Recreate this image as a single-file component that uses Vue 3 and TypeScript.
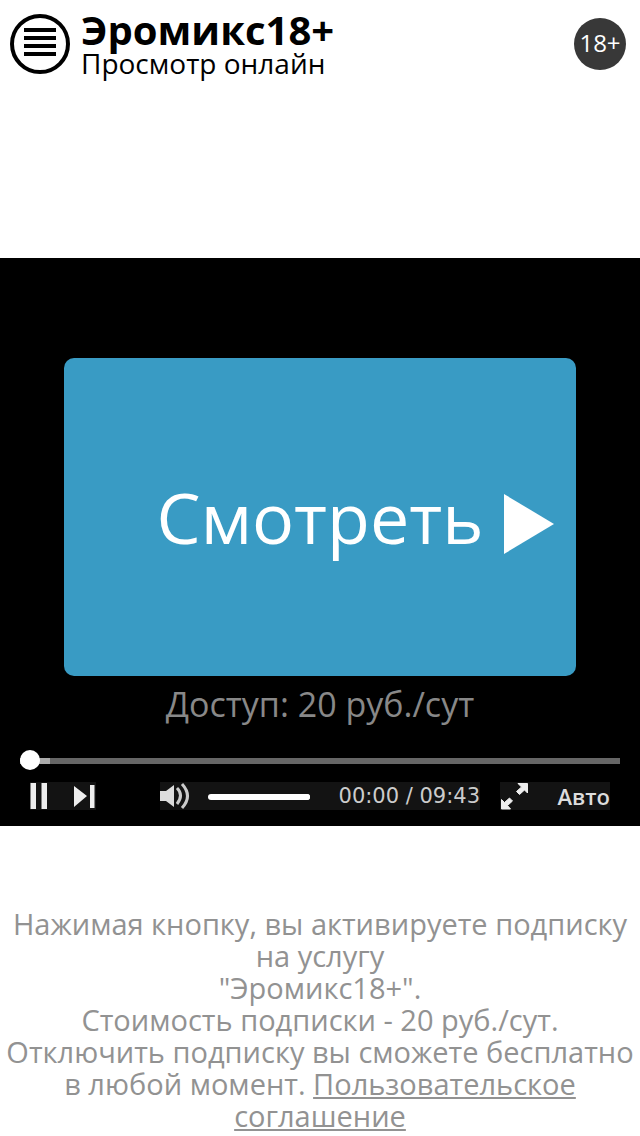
<script setup lang="ts">
import { ref } from 'vue'

const progress = ref(0)
const volume = ref(100)
</script>

<template>
  <div class="page">
    <header class="header">
      <button class="menu" type="button" aria-label="Меню">
        <svg viewBox="0 0 60 60" aria-hidden="true">
          <circle cx="30" cy="30" r="28" fill="none" stroke="#000" stroke-width="4" />
          <path d="M14 14h32v4H14zM14 22h32v4H14zM14 30h32v4H14zM14 38h32v4H14z" />
        </svg>
      </button>
      <div class="brand">
        <h1 class="title">Эромикс18+</h1>
        <p class="subtitle">Просмотр онлайн</p>
      </div>
      <span class="age">18+</span>
    </header>

    <main class="player">
      <button class="watch" type="button">
        <span class="watch-label">Смотреть</span>
        <svg class="watch-icon" viewBox="0 0 50 60" aria-hidden="true">
          <path d="M0 0L50 30L0 60z" fill="#fff" />
        </svg>
      </button>
      <p class="price">Доступ: 20 руб./сут</p>

      <input v-model="progress" class="seek" type="range" min="0" max="100" aria-label="Позиция" />

      <div class="controls">
        <div class="group">
          <button class="ctl pause" type="button" aria-label="Пауза">
            <svg viewBox="0 0 18 28" aria-hidden="true">
              <path d="M0.5 1h5.5v26H0.500zM11.500 1h5.500v26h-5.500z" fill="#eee" />
            </svg>
          </button>
          <button class="ctl next" type="button" aria-label="Следующее">
            <svg viewBox="0 0 24 28" aria-hidden="true">
              <path d="M2 4L15 14L2 25zM18 3h4.500v23h-4.500z" fill="#eee" />
            </svg>
          </button>
        </div>
        <div class="group sound">
          <button class="ctl mute" type="button" aria-label="Звук">
            <svg viewBox="0 0 30 28" aria-hidden="true">
              <path d="M0 9h6L14 3v22L6 19H0z" fill="#ddd" />
              <path d="M17 6q7 7 0 16M22 2q11 12 0 24" fill="none" stroke="#ccc" stroke-width="3" />
            </svg>
          </button>
          <input v-model="volume" class="volume" type="range" min="0" max="100" aria-label="Громкость" />
          <span class="time">00:00 / 09:43</span>
        </div>
        <div class="group view">
          <button class="ctl full" type="button" aria-label="Во весь экран">
            <svg viewBox="0 0 28 28" aria-hidden="true">
              <path
                d="M18 1.500h9.500V11l-3-3l-5 4.500l-3-3l5-4.500zM1.500 27v-9.500l3 3l5-4.500l3 3l-5 4.500l3 3.500z"
                fill="#eee"
                stroke="#eee"
                stroke-linejoin="round"
              />
            </svg>
          </button>
          <button class="ctl quality" type="button">Авто</button>
        </div>
      </div>
    </main>

    <footer class="terms">
      Нажимая кнопку, вы активируете подписку на&nbsp;услугу<br />
      "Эромикс18+".<br />
      Стоимость подписки - 20 руб./сут.<br />
      Отключить подписку вы сможете бесплатно в&nbsp;любой момент.
      <a href="#">Пользовательское соглашение</a>
    </footer>
  </div>
</template>

<style>
body {
  background: #fff;
}
</style>

<style scoped>
.page {
  font-family: "Open Sans", "Noto Sans", sans-serif;
  color: #000;
}
button {
  border: 0;
  padding: 0;
  margin: 0;
  background: none;
  color: inherit;
  font: inherit;
  cursor: pointer;
}
svg {
  display: block;
}
h1,
p {
  margin: 0;
}
.header {
  display: flex;
  align-items: flex-start;
  box-sizing: border-box;
  min-height: 258px;
  padding: 14px 14px 0 10px;
}
.menu,
.menu svg {
  width: 60px;
  height: 60px;
}
.brand {
  flex: 1;
  padding-left: 11px;
}
.title {
  font-size: 40px;
  line-height: 32px;
  font-weight: 700;
}
.subtitle {
  font-size: 28px;
  line-height: 34px;
}
.age {
  width: 52px;
  height: 52px;
  margin-top: 4px;
  border-radius: 50%;
  background: #383838;
  color: #fff;
  font-size: 24px;
  line-height: 50px;
  text-align: center;
}
.player {
  display: flex;
  flex-direction: column;
  align-items: center;
  padding: 100px 0 16px;
  background: #000;
}
.watch {
  display: grid;
  grid-template-columns: 1fr auto 1fr;
  grid-template-rows: 110px;
  align-items: center;
  width: 80%;
  padding: 111px 0 97px;
  border-radius: 10px;
  background: #399bc4;
  color: #fff;
}
.watch-label {
  grid-column: 2;
  align-self: start;
  font-size: 70px;
  line-height: 96px;
}
.watch-icon {
  width: 50px;
  height: 60px;
  margin-left: 21px;
}
.price {
  color: #888;
  font-size: 34px;
  line-height: 56px;
}
.seek {
  appearance: none;
  width: calc(100% - 40px);
  height: 20px;
  margin: 18px 0 12px;
  background: linear-gradient(90deg, #aaa 30px, #666 30px) 0 8px / 100% 6px no-repeat;
}
.seek::-webkit-slider-thumb {
  appearance: none;
  width: 20px;
  height: 20px;
  border-radius: 50%;
  background: #fff;
}
.controls {
  display: flex;
  box-sizing: border-box;
  width: 100%;
  padding: 0 30px;
}
.group {
  display: flex;
  align-items: center;
  height: 28px;
  background: #131313;
}
.sound {
  flex: 1;
  margin: 0 20px 0 64px;
}
.view {
  justify-content: space-between;
  width: 110px;
}
.ctl svg {
  height: 28px;
}
.pause svg {
  width: 18px;
}
.next {
  margin-left: 24px;
}
.next svg {
  width: 24px;
}
.mute svg {
  width: 30px;
}
.full svg {
  width: 28px;
}
.volume {
  appearance: none;
  width: 102px;
  height: 6px;
  margin: 2px 0 0 18px;
  border-radius: 3px;
  background: #fff;
}
.volume::-webkit-slider-thumb {
  appearance: none;
  width: 6px;
  height: 6px;
  border-radius: 50%;
  background: #fff;
}
.time {
  flex: 1;
  color: #ccc;
  font-family: "DejaVu Sans", sans-serif;
  font-size: 21px;
  line-height: 28px;
  text-align: right;
  white-space: nowrap;
}
.quality {
  color: #ddd;
  font-size: 22px;
  line-height: 28px;
  font-weight: 600;
}
.terms {
  padding: 82px 4px 0;
  color: #929292;
  font-size: 29px;
  line-height: 32px;
  text-align: center;
}
.terms a {
  color: inherit;
}
</style>
